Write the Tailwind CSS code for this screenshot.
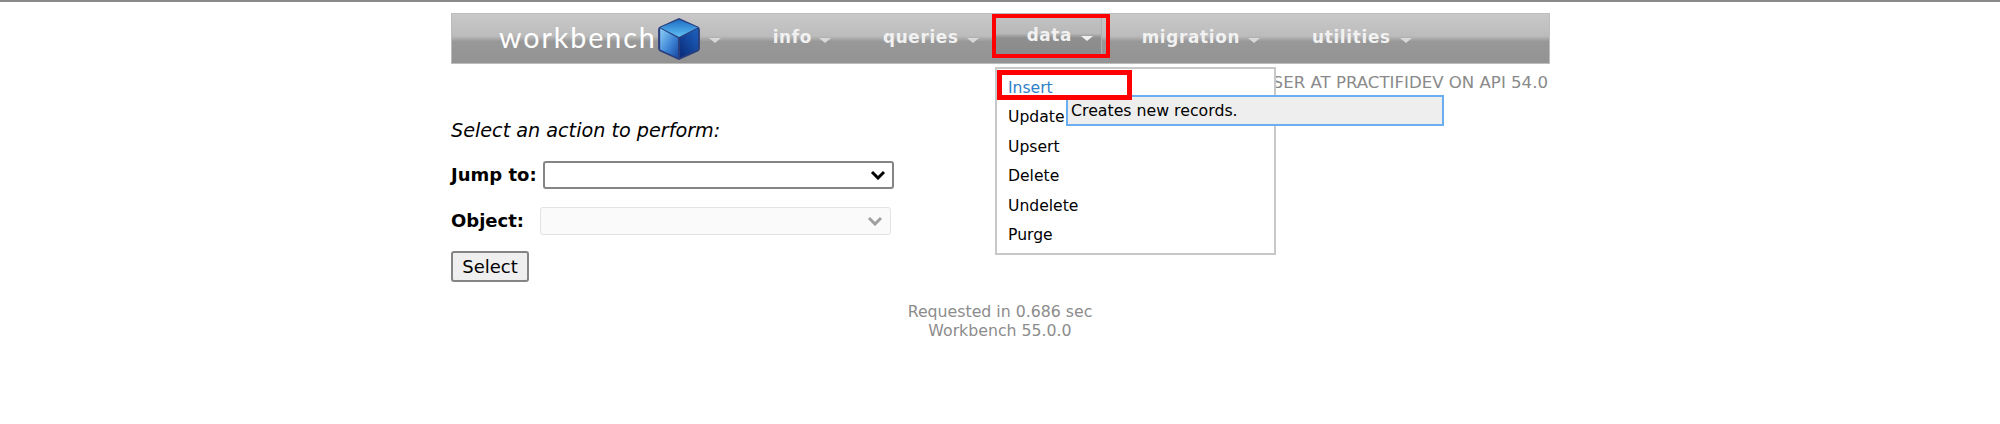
<!DOCTYPE html>
<html lang="en">
<head>
    <meta charset="UTF-8">
    <title>Workbench</title>
    <script src="https://cdn.jsdelivr.net/npm/@tailwindcss/browser@4"></script>
</head>
<body class="bg-white font-['DejaVu_Sans',sans-serif] text-black">
    <div class="h-[424px] w-[2000px] overflow-hidden border-t-2 border-[#8a8a8a]">
        <div class="relative mx-auto ml-[451px] w-[1099px]">

            <!-- menu bar -->
            <nav class="mt-[11px] flex h-[51px] items-center border border-[#bdbdbd] bg-[linear-gradient(#c8c8c8_0%,#bcbcbc_45%,#989898_56%,#939393_100%)] pb-[2px] text-[16.8px] font-bold tracking-[0.7px] text-[#f1f1f1]">
                <div class="ml-[47px] flex items-center">
                    <span class="font-['Lato',sans-serif] text-[28.7px] leading-none font-normal tracking-[1.9px] text-white">workbench</span>
                    <svg class="mt-[2px] -ml-[1px]" width="46" height="46" viewBox="0 0 44 44">
                        <defs>
                            <linearGradient id="cubeTop" x1="0" y1="0" x2="0" y2="1">
                                <stop offset="0" stop-color="#1f6fc4"/>
                                <stop offset="1" stop-color="#5fc0f5"/>
                            </linearGradient>
                            <linearGradient id="cubeLeft" x1="0" y1="0" x2="1" y2="1">
                                <stop offset="0" stop-color="#8fd0f7"/>
                                <stop offset="0.55" stop-color="#3f86d6"/>
                                <stop offset="1" stop-color="#174aa5"/>
                            </linearGradient>
                            <linearGradient id="cubeRight" x1="1" y1="0" x2="0" y2="1">
                                <stop offset="0" stop-color="#1d62c0"/>
                                <stop offset="1" stop-color="#0a2a78"/>
                            </linearGradient>
                        </defs>
                        <path d="M22 2 L40 10 Q42 11 42 13 L42 31 Q42 33 40 34 L22 42 L4 34 Q2 33 2 31 L2 13 Q2 11 4 10 Z" fill="#2a3f7d"/>
                        <polygon points="22,3.5 40,11 22,20 4,11" fill="url(#cubeTop)"/>
                        <polygon points="4,12 21,21 21,40 4,32" fill="url(#cubeLeft)"/>
                        <polygon points="23,21 40,12 40,32 23,40" fill="url(#cubeRight)"/>
                    </svg>
                    <span class="ml-[7px] mt-[6px] h-0 w-0 border-x-[6px] border-t-[5px] border-x-transparent border-t-[#d8d8d8]"></span>
                </div>
                <div class="ml-[52px] flex items-center">
                    <span>info</span>
                    <span class="ml-[7px] mt-[6px] h-0 w-0 border-x-[6px] border-t-[5px] border-x-transparent border-t-[#d8d8d8]"></span>
                </div>
                <div class="ml-[52px] flex items-center">
                    <span>queries</span>
                    <span class="ml-[8px] mt-[6px] h-0 w-0 border-x-[6px] border-t-[5px] border-x-transparent border-t-[#d8d8d8]"></span>
                </div>
                <div class="ml-[13px] flex h-[43px] w-[110px] items-center self-start border border-[#b0b0b0] bg-[linear-gradient(#c4c4c4_0%,#b8b8b8_45%,#8f8f8f_56%,#8a8a8a_100%)] pl-[34px]">
                    <span>data</span>
                    <span class="ml-[9px] mt-[6px] h-0 w-0 border-x-[6px] border-t-[5px] border-x-transparent border-t-[#f0f0f0]"></span>
                </div>
                <div class="ml-[40px] flex items-center">
                    <span>migration</span>
                    <span class="ml-[8px] mt-[6px] h-0 w-0 border-x-[6px] border-t-[5px] border-x-transparent border-t-[#d8d8d8]"></span>
                </div>
                <div class="ml-[52px] flex items-center">
                    <span>utilities</span>
                    <span class="ml-[9px] mt-[6px] h-0 w-0 border-x-[6px] border-t-[5px] border-x-transparent border-t-[#d8d8d8]"></span>
                </div>
            </nav>

            <!-- user line -->
            <p class="mt-[10px] pr-[2px] text-right text-[16.6px] leading-[18px] text-[#8a8a8a]">SER AT PRACTIFIDEV ON API 54.0</p>

            <!-- form -->
            <p class="mt-[29px] text-[19.2px] leading-[20px] italic">Select an action to perform:</p>
            <div class="mt-[20px] flex h-[28px] items-center">
                <label class="mb-[2px] w-[92px] text-[18px] font-bold">Jump to:</label>
                <div class="flex h-[28px] w-[351px] items-center justify-end rounded-[3px] border-2 border-[#858585] bg-white pr-[6px]">
                    <svg width="16" height="10" viewBox="0 0 16 10"><path d="M2 2 L8 8 L14 2" fill="none" stroke="#000" stroke-width="3"/></svg>
                </div>
            </div>
            <div class="mt-[18px] flex h-[28px] items-center">
                <label class="mb-[2px] w-[90px] text-[18px] font-bold">Object:</label>
                <div class="-ml-[1px] flex h-[28px] w-[351px] items-center justify-end rounded-[3px] border border-[#e3e3e3] bg-[#fafafa] pr-[7px]">
                    <svg width="16" height="10" viewBox="0 0 16 10"><path d="M2 2 L8 8 L14 2" fill="none" stroke="#a0a0a0" stroke-width="3"/></svg>
                </div>
            </div>
            <button class="mt-[16px] block h-[31px] w-[78px] rounded-[3px] border-2 border-[#858585] bg-[#efefef] text-[18px] leading-none">Select</button>

            <!-- footer -->
            <div class="mt-[20px] ml-[-451px] w-[2000px] text-center text-[15.75px] leading-[19px] text-[#8c8c8c]">
                <div>Requested in 0.686 sec</div>
                <div>Workbench 55.0.0</div>
            </div>

            <!-- data dropdown -->
            <ul class="absolute top-[54px] left-[544px] h-[188px] w-[281px] border-2 border-[#c8c8c8] bg-white pt-[5px] pl-[11px] text-[15.6px] leading-[29.4px]">
                <li class="text-[#2f80c8]">Insert</li>
                <li>Update</li>
                <li>Upsert</li>
                <li>Delete</li>
                <li>Undelete</li>
                <li>Purge</li>
            </ul>

            <!-- tooltip -->
            <div class="absolute top-[82px] left-[615px] flex h-[31px] w-[378px] items-center border-2 border-[#6aaef0] bg-[#eeeeee] pl-[3px] text-[15.75px]">Creates new records.</div>

            <!-- annotation boxes -->
            <div class="absolute top-[1px] left-[541px] h-[44px] w-[118px] border-[4px] border-[#ff0000]"></div>
            <div class="absolute top-[57px] left-[546px] h-[30px] w-[135px] border-[5px] border-[#ff0000]"></div>
        </div>
    </div>
</body>
</html>
